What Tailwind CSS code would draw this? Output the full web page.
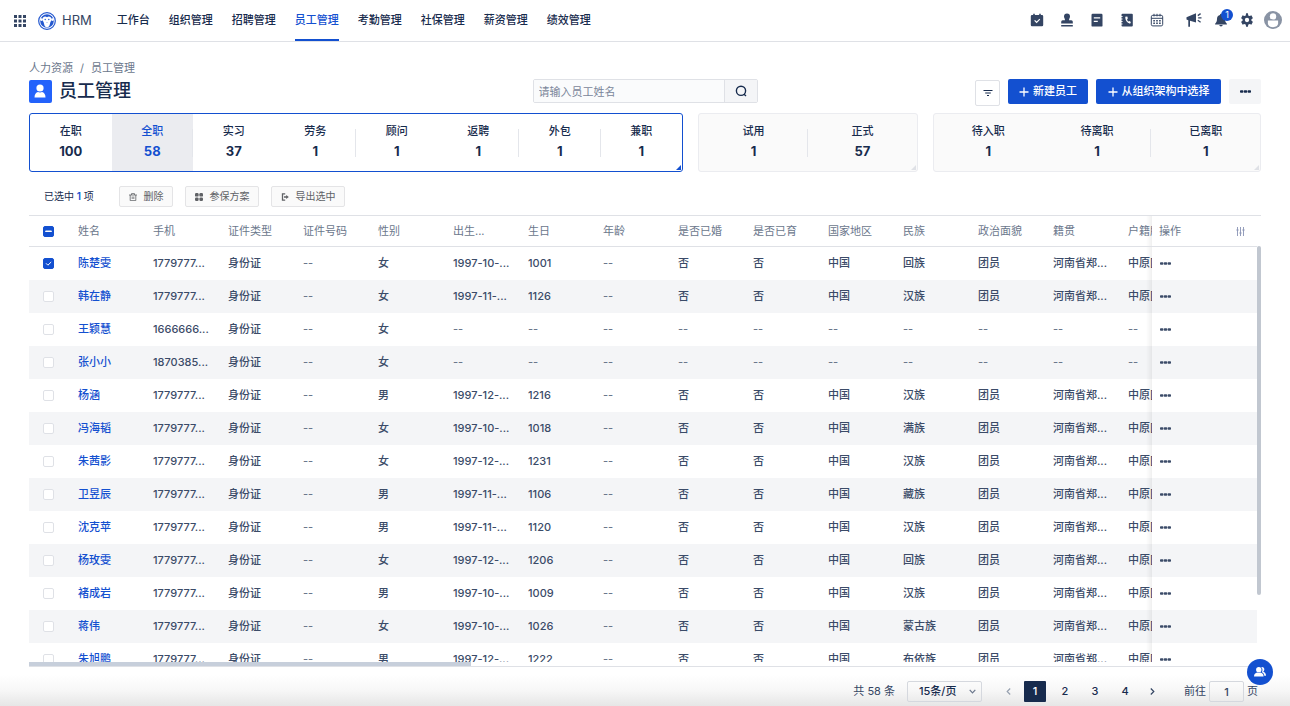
<!DOCTYPE html>
<html lang="zh-CN">
<head>
    <meta charset="UTF-8">
    <meta name="viewport" content="width=device-width, initial-scale=1.0">
    <title>HRM - 员工管理</title>
    <script src="https://cdn.jsdelivr.net/npm/@tailwindcss/browser@4"></script>
</head>
<body class="h-screen flex flex-col overflow-hidden bg-white text-[11px] text-[#172b4d] font-['Inter','Noto_Sans_CJK_SC',sans-serif]">

    <header class="h-[42px] shrink-0 flex items-center border-b border-[#dfe1e6] pl-3.5 pr-2">
        <button aria-label="应用">
            <svg class="size-3 text-[#344563]" viewBox="0 0 12 12" fill="currentColor">
                <path d="M0 0h3v3H0zM4.5 0h3v3h-3zM9 0h3v3H9zM0 4.5h3v3H0zM4.5 4.5h3v3h-3zM9 4.5h3v3H9zM0 9h3v3H0zM4.5 9h3v3h-3zM9 9h3v3H9z"/>
            </svg>
        </button>
        <svg class="size-[18px] ml-3" viewBox="0 0 18 18">
            <circle cx="9" cy="9" r="8.3" fill="#fff" stroke="#2458cf" stroke-width="1.2"/>
            <path d="M9 2.200a6.800 6.800 0 1 0 0 13.600 6.800 6.800 0 0 0 0-13.600z" fill="#2458cf"/>
            <circle cx="3.500" cy="7.600" r="1.400" fill="#fff"/>
            <circle cx="14.500" cy="7.600" r="1.400" fill="#fff"/>
            <path d="M9 5.200C7.500 3.800 4.500 4.400 4.500 7.200c0 1.500.8 2.200 1.300 3.500.5 1.600.7 4.600 3.200 4.600s2.700-3 3.200-4.600c.5-1.300 1.300-2 1.300-3.500 0-2.800-3-3.400-4.500-2z" fill="#fff"/>
            <circle cx="7.200" cy="7.500" r=".7" fill="#2458cf"/>
            <circle cx="10.800" cy="7.500" r=".7" fill="#2458cf"/>
            <path d="M8.400 10h1.200L9 10.800z" fill="#2458cf"/>
        </svg>
        <span class="ml-1.5 text-[13px] text-[#344563]">HRM</span>

        <nav class="h-full flex gap-[19px] ml-[25px] font-medium">
            <a href="#" class="flex items-center">工作台</a>
            <a href="#" class="flex items-center">组织管理</a>
            <a href="#" class="flex items-center">招聘管理</a>
            <a href="#" class="flex items-center text-[#1350d0] border-b-2 border-[#1350d0] pt-0.5">员工管理</a>
            <a href="#" class="flex items-center">考勤管理</a>
            <a href="#" class="flex items-center">社保管理</a>
            <a href="#" class="flex items-center">薪资管理</a>
            <a href="#" class="flex items-center">绩效管理</a>
        </nav>

        <div class="flex items-center ml-auto pb-0.5 text-[#344563]">
            <div class="flex items-center gap-4 mr-[22px]">
                <button aria-label="待办">
                    <svg class="size-3.5" viewBox="0 0 14 14"><path fill="currentColor" d="M2 2h1.200V.8h1.600V2h4.400V.8h1.600V2H12a1.200 1.200 0 0 1 1.200 1.200v8.900a1.200 1.200 0 0 1-1.200 1.200H2A1.200 1.200 0 0 1 .8 12.100V3.200A1.200 1.200 0 0 1 2 2z"/><path d="M4.600 7.400l2 1.900 3.200-3.200" fill="none" stroke="#fff" stroke-width="1.200"/></svg>
                </button>
                <button aria-label="审批">
                    <svg class="size-3.5" viewBox="0 0 14 14" fill="currentColor"><path d="M7 .5a3 3 0 0 1 3 3c0 1.500-1 2.200-1 3.700h2.300a1.500 1.500 0 0 1 1.500 1.500v1.800H1.200V8.700a1.500 1.500 0 0 1 1.500-1.500H5c0-1.500-1-2.200-1-3.700a3 3 0 0 1 3-3zM1.200 12h11.600v1.500H1.200z"/></svg>
                </button>
                <button aria-label="文档">
                    <svg class="size-3.5" viewBox="0 0 14 14"><rect x="1.500" y=".8" width="11" height="12.800" rx="1.200" fill="currentColor"/><path d="M3.800 4.900h6.400M3.800 8.300h4" stroke="#fff" stroke-width="1.300"/></svg>
                </button>
                <button aria-label="通讯录">
                    <svg class="size-3.5" viewBox="0 0 14 14"><rect x="1.500" y=".8" width="11.300" height="12.800" rx="1" fill="currentColor"/><path d="M1 3.500h1.600M1 6h1.600M1 8.500h1.600M1 11h1.600" stroke="#fff" stroke-width=".9"/><path d="M5.200 3.700c0 3.500 1.700 6.200 4.900 7l.8-1.600-1.700-1.100-.8.600C7.600 8 7.200 7 7.100 5.900l.8-.5-.6-2z" fill="#fff"/></svg>
                </button>
                <button aria-label="日历">
                    <svg class="size-3.5" viewBox="0 0 14 14" fill="none" stroke="currentColor"><rect x="1.300" y="2.300" width="11.400" height="10.600" rx="1.500"/><path d="M1.300 5.300h11.400M4 .8v2.600M7 .8v2.600M10 .8v2.600"/><path d="M3.300 7.700h1.600M6.200 7.700h1.600M9.100 7.700h1.600M3.300 10.300h1.600M6.200 10.300h1.600M9.100 10.300h1.600" stroke-width="1.500"/></svg>
                </button>
            </div>
            <button aria-label="公告">
                <svg class="size-4" viewBox="0 0 16 16"><path d="M.5 5.200L10 1.300v9.200L4 8.800v6H2.300V8.200L.5 7.600z" fill="currentColor"/><path d="M11.800 3.600l2.800-2M12.200 5.900h3.300M11.800 8.200l2.800 2" stroke="currentColor" stroke-width="1.300"/></svg>
            </button>
            <button aria-label="通知" class="relative ml-3">
                <svg class="size-3.5" viewBox="0 0 14 14" fill="currentColor"><path d="M7 .8a1 1 0 0 1 1 1v.3c1.900.4 3 1.900 3 3.900 0 2.500.6 3.500 1.900 4.700v.8H1.100v-.8C2.400 9.500 3 8.500 3 6c0-2 1.100-3.500 3-3.900v-.3a1 1 0 0 1 1-1zM5.300 12.100h3.400a1.700 1.400 0 0 1-3.400 0z"/></svg>
                <span class="absolute -top-1 left-[7px] size-3 rounded-full bg-[#1350d0] text-white text-[9px] leading-3 text-center">1</span>
            </button>
            <button aria-label="设置" class="ml-3">
                <svg class="size-3.5" viewBox="0 0 24 24" fill="currentColor"><path d="M19.400 13c0-.3.1-.6.100-1s0-.7-.1-1l2.500-1.900c.2-.2.300-.5.100-.7l-2.300-4c-.1-.3-.4-.4-.7-.3l-2.900 1.200c-.6-.5-1.300-.9-2-1.200L13.700 1c0-.3-.3-.5-.6-.5h-2.200c-.3 0-.6.2-.6.5L9.900 4.100c-.7.300-1.400.7-2 1.200L5 4.100c-.3-.1-.6 0-.7.300l-2.300 4c-.2.200-.1.500.1.700L4.600 11c0 .3-.1.700-.1 1s0 .7.1 1l-2.500 1.900c-.2.200-.3.500-.1.700l2.300 4c.1.300.4.400.7.300l2.900-1.200c.6.500 1.300.9 2 1.200l.4 3.100c0 .3.300.5.6.5h2.200c.3 0 .6-.2.6-.5l.4-3.100c.7-.3 1.400-.7 2-1.200l2.900 1.200c.3.100.6 0 .7-.3l2.300-4c.2-.2.100-.5-.1-.7zM12 15.700a3.700 3.700 0 1 1 0-7.400 3.700 3.700 0 0 1 0 7.400z"/></svg>
            </button>
            <button aria-label="我的" class="ml-2.5">
                <svg class="size-[18px]" viewBox="0 0 18 18"><circle cx="9" cy="9" r="9" fill="#8993a4"/><circle cx="9" cy="5.400" r="3.200" fill="#fff"/><path d="M3.900 9.500h10.200v3.100c0 2.200-2.300 3.600-5.100 3.600s-5.100-1.400-5.100-3.600z" fill="#fff"/></svg>
            </button>
        </div>
    </header>

    <main class="flex-1 min-h-0 flex flex-col px-[29px] pt-[18px]">
        <div class="flex gap-[7px] leading-4 text-[#6b778c]">
            <a href="#">人力资源</a><span>/</span><a href="#">员工管理</a>
        </div>

        <div class="grid grid-cols-[1fr_225px_1fr] grid-rows-[24px] mt-[3px]">
            <div class="flex items-center">
                <svg class="size-[23px]" viewBox="0 0 23 23"><rect width="23" height="23" rx="2" fill="#2362fb"/><circle cx="11" cy="8" r="3.600" fill="#fff"/><path d="M5.500 17.500c0-3.200 1.500-5 3.500-5.500.7.600 3.300.6 4 0 2 .5 3.500 2.300 3.500 5.500z" fill="#fff"/></svg>
                <h1 class="ml-[7px] text-lg leading-5 font-medium">员工管理</h1>
            </div>
            <div class="flex border border-[#dfe1e6] rounded-xs overflow-hidden">
                <input type="text" aria-label="搜索员工" placeholder="请输入员工姓名" class="flex-1 min-w-0 px-[5px] pt-0.5 bg-[#fafbfc] placeholder:text-[#7a869a]">
                <button aria-label="搜索" class="w-[33px] flex items-center justify-center border-l border-[#dfe1e6] bg-[#f4f5f7]">
                    <svg class="size-3" viewBox="0 0 12 12" fill="none" stroke="currentColor" stroke-width="1.400"><circle cx="6" cy="5.800" r="4.600"/><path d="M8.800 9l2.200 2"/></svg>
                </button>
            </div>
            <div class="flex items-start justify-end gap-2 font-medium">
                <button aria-label="筛选" class="w-[25px] h-[26px] mt-px flex items-center justify-center border border-[#dfe1e6] rounded-xs">
                    <svg class="w-2.5 h-2" viewBox="0 0 10 8" stroke="currentColor" stroke-width="1.100"><path d="M.5 1.500h9M2.200 4h5.600M4 6.500h2"/></svg>
                </button>
                <button class="w-20 h-[25px] flex items-center justify-center gap-1 rounded-xs bg-[#1350d0] text-white">
                    <svg class="size-2.5" viewBox="0 0 10 10" stroke="currentColor" stroke-width="1.300"><path d="M5 .5v9M.5 5h9"/></svg>新建员工
                </button>
                <button class="w-[125px] h-[25px] flex items-center justify-center gap-1 rounded-xs bg-[#1350d0] text-white">
                    <svg class="size-2.5" viewBox="0 0 10 10" stroke="currentColor" stroke-width="1.300"><path d="M5 .5v9M.5 5h9"/></svg>从组织架构中选择
                </button>
                <button aria-label="更多" class="w-8 h-[25px] flex items-center justify-center rounded-xs bg-[#f4f5f7]">
                    <svg class="w-[11px] h-[3px]" viewBox="0 0 11 3" fill="currentColor"><rect y=".3" width="3.400" height="2.400" rx=".8"/><rect x="3.800" y=".3" width="3.400" height="2.400" rx=".8"/><rect x="7.600" y=".3" width="3.400" height="2.400" rx=".8"/></svg>
                </button>
            </div>
        </div>

        <div id="statusGroups" class="grid grid-cols-[654fr_220fr_328fr] gap-[15px] mt-2.5"></div>

        <div class="flex items-center mt-3.5 pl-[15px] text-[10px]">
            <span class="w-[75px]">已选中 <span class="text-[#1350d0] font-semibold">1</span> 项</span>
            <div class="flex gap-3 text-[#606266]">
                <button class="w-[54px] h-[21px] flex items-center justify-center gap-[7px] border border-[#e4e4e6] rounded-xs bg-[#fafafa]">
                    <svg class="size-2" viewBox="0 0 8 8" fill="none" stroke="currentColor" stroke-width=".8"><path d="M0 2h8M2.500 2V.6h3V2M1.200 2v5.600h5.600V2M3.200 3.500V6M4.800 3.500V6"/></svg>删除
                </button>
                <button class="w-[74px] h-[21px] flex items-center justify-center gap-[7px] border border-[#e4e4e6] rounded-xs bg-[#fafafa]">
                    <svg class="size-2" viewBox="0 0 8 8" fill="currentColor"><rect width="3.600" height="3.600" rx="1.200"/><rect x="4.400" width="3.600" height="3.600" rx="1.200"/><rect y="4.400" width="3.600" height="3.600" rx="1.200"/><rect x="4.400" y="4.400" width="3.600" height="3.600" rx="1.200"/></svg>参保方案
                </button>
                <button class="w-[74px] h-[21px] flex items-center justify-center gap-[7px] border border-[#e4e4e6] rounded-xs bg-[#fafafa]">
                    <svg class="size-2" viewBox="0 0 8 8" fill="none" stroke="currentColor" stroke-width="1.300"><path d="M4.200.8H1.500v6.400h2.700M3 4h3"/><path d="M5.200 2L7.800 4 5.200 6z" fill="currentColor" stroke="none"/></svg>导出选中
                </button>
            </div>
        </div>

        <div class="flex-1 min-h-0 grid grid-cols-[1fr_4px] grid-rows-[1fr_4px] mt-2 border-y border-[#dfe1e6]">
            <div class="min-w-0 min-h-0 overflow-hidden">
                <table class="w-[1270px] table-fixed border-separate border-spacing-0 text-left">
                    <thead class="text-[#6b778c]">
                        <tr id="headRow"></tr>
                    </thead>
                    <tbody id="rows" class="text-[#3b4b68] font-medium"></tbody>
                </table>
            </div>
            <div class="pt-[30px]"><div class="h-[84%] rounded-xs bg-[#c1c7d0]"></div></div>
            <div><div class="h-1 w-[36%] bg-[#c7cfdb]"></div></div>
        </div>
    </main>

    <footer class="h-[39px] shrink-0 flex items-center justify-end pt-2.5 pl-[29px] pr-8 bg-linear-to-b from-white from-20% via-[#f7f7f7] via-60% to-[#e6e6e6]">
        <span class="text-[#344563]">共 58 条</span>
        <div class="relative ml-3">
            <select aria-label="每页条数" class="appearance-none w-[75px] h-[21px] pl-[11px] border border-[#d5d8de] rounded-xs font-medium">
                <option>15条/页</option>
                <option>30条/页</option>
            </select>
            <svg class="absolute right-1.5 top-2 w-[7px] h-[5px] text-[#6b778c] pointer-events-none" viewBox="0 0 7 5" fill="none" stroke="currentColor" stroke-width="1.200"><path d="M.7.8l2.800 3L6.300.8"/></svg>
        </div>
        <nav class="flex gap-2 ml-[18px] font-medium">
            <button aria-label="上一页" class="w-4 h-[21px] flex items-center justify-center text-[#97a0af]">
                <svg class="w-[5px] h-[7px]" viewBox="0 0 5 7" fill="none" stroke="currentColor" stroke-width="1.200"><path d="M4.200.5l-3 3 3 3"/></svg>
            </button>
            <button class="w-[22px] h-[21px] bg-[#172b4d] text-white rounded-[1px]">1</button>
            <button class="w-[22px] h-[21px]">2</button>
            <button class="w-[22px] h-[21px]">3</button>
            <button class="w-[22px] h-[21px]">4</button>
            <button aria-label="下一页" class="w-4 h-[21px] flex items-center justify-center text-[#344563]">
                <svg class="w-[5px] h-[7px]" viewBox="0 0 5 7" fill="none" stroke="currentColor" stroke-width="1.200"><path d="M.8.5l3 3-3 3"/></svg>
            </button>
        </nav>
        <label class="flex items-center gap-[3px] ml-6 text-[#344563]">前往
            <input type="text" value="1" class="w-[35px] h-[21px] border border-[#d5d8de] rounded-xs text-center font-medium">页
        </label>
    </footer>

    <button aria-label="联系人" class="fixed right-[17px] bottom-[21px] size-[26px] flex items-center justify-center rounded-full bg-[#1350d0] text-white">
        <svg class="size-3" viewBox="0 0 12 12" fill="currentColor"><circle cx="4.800" cy="3.800" r="2.700"/><path d="M0 10.500c0-2.300 1.500-3.600 3.200-3.900.9.600 2.300.6 3.200 0 1.700.3 3.200 1.600 3.200 3.900z"/><path d="M7.300 1.200c2.800-.8 4.200 2.700 1.900 4.600 1.600.5 2.800 1.800 2.800 4h-1.700c-.2-1.800-1-3-2.400-3.600.9-1.700.8-3.700-.6-5z"/></svg>
    </button>

    <script>
        // [label, count, divider on the right]
        const groups = [
            { active: true, items: [["在职", 100, 0], ["全职", 58, 1], ["实习", 37, 0], ["劳务", 1, 1], ["顾问", 1, 0], ["返聘", 1, 1], ["外包", 1, 1], ["兼职", 1, 0]] },
            { active: false, items: [["试用", 1, 1], ["正式", 57, 0]] },
            { active: false, items: [["待入职", 1, 0], ["待离职", 1, 1], ["已离职", 1, 0]] },
        ];
        const columns = ["姓名", "手机", "证件类型", "证件号码", "性别", "出生...", "生日", "年龄", "是否已婚", "是否已育", "国家地区", "民族", "政治面貌", "籍贯", "户籍所"];
        // name, phone, gender, birth month, birthday, ethnic group
        const people = [
            ["陈楚雯", "1779777...", "女", "1997-10-...", "1001", "回族"],
            ["韩在静", "1779777...", "女", "1997-11-...", "1126", "汉族"],
            ["王颖慧", "1666666...", "女"],
            ["张小小", "1870385...", "女"],
            ["杨涵", "1779777...", "男", "1997-12-...", "1216", "汉族"],
            ["冯海韬", "1779777...", "女", "1997-10-...", "1018", "满族"],
            ["朱茜影", "1779777...", "女", "1997-12-...", "1231", "汉族"],
            ["卫昱辰", "1779777...", "男", "1997-11-...", "1106", "藏族"],
            ["沈克苹", "1779777...", "男", "1997-11-...", "1120", "汉族"],
            ["杨玫雯", "1779777...", "女", "1997-12-...", "1206", "回族"],
            ["褚成岩", "1779777...", "男", "1997-10-...", "1009", "汉族"],
            ["蒋伟", "1779777...", "女", "1997-10-...", "1026", "蒙古族"],
            ["朱旭鹏", "1779777...", "男", "1997-12-...", "1222", "布依族"],
        ];

        document.getElementById("statusGroups").innerHTML = groups.map(g => `
            <div class="relative flex h-[59px] border rounded-[3px] ${g.active ? "border-[#1350d0]" : "border-[#ebecf0] bg-[#fafafa]"}">
                ${g.items.map(([label, count, line]) => `
                    <button class="flex-1 relative flex flex-col items-center justify-center pb-[3px] ${label === "全职" ? "bg-[#ebecf0] text-[#1350d0]" : ""}">
                        <span class="leading-5 font-medium">${label}</span>
                        <span class="text-[13px] leading-5 font-bold">${count}</span>
                        ${line ? `<span class="absolute right-0 top-[15px] h-7 w-px bg-[#e4e6eb]"></span>` : ""}
                    </button>`).join("")}
                <svg class="absolute right-px bottom-px size-[5px] ${g.active ? "text-[#1350d0]" : "text-[#dfe1e6]"}" viewBox="0 0 5 5" fill="currentColor"><path d="M5 0v5H0z"/></svg>
            </div>`).join("");

        const stickyCell = "sticky right-0 before:absolute before:inset-y-0 before:-left-1.5 before:w-1.5 before:bg-linear-to-r before:from-transparent before:to-black/6";

        function checkbox(label, checked, mark) {
            return `<label class="relative block size-[11px] ml-3.5">
                <input type="checkbox" aria-label="${label}" ${checked ? "checked" : ""} class="block appearance-none size-[11px] rounded-xs border border-[#dfe1e6] bg-white checked:bg-[#1350d0] checked:border-[#1350d0]">
                ${checked ? `<svg class="absolute inset-0 size-[11px]" viewBox="0 0 11 11" fill="none" stroke="#fff" stroke-width="1"><path d="${mark}"/></svg>` : ""}
            </label>`;
        }

        document.getElementById("headRow").innerHTML =
            `<th class="w-10 h-[31px] p-0 border-b border-[#dfe1e6]">${checkbox("全选", true, "M2.500 5h6v.5h-6z")}</th>` +
            columns.map(c => `<th class="w-[75px] p-0 pt-px pl-[9px] font-normal whitespace-nowrap overflow-hidden border-b border-[#dfe1e6]">${c}</th>`).join("") +
            `<th class="${stickyCell} w-[105px] p-0 pt-px pl-[7px] font-normal bg-white border-b border-[#dfe1e6]">
                <div class="flex items-center justify-between pr-3">操作
                    <button aria-label="列设置"><svg class="size-[9px] text-[#8993b4]" viewBox="0 0 9 9" fill="none" stroke="currentColor" stroke-width=".9"><path d="M1.500 0v9M4.500 0v9M7.500 0v9M.3 3h2.400M3.300 6h2.400M6.300 3h2.400"/></svg></button>
                </div>
            </th>`;

        document.getElementById("rows").innerHTML = people.map(([name, phone, gender, birth, day, ethnic], i) => {
            const full = Boolean(birth);
            const values = [phone, "身份证", "--", gender, birth, day, "--"]
                .concat(full ? ["否", "否", "中国", ethnic, "团员", "河南省郑...", "中原区"] : ["", "", "", "", "", "", ""]);
            const bg = i % 2 ? "bg-[#f4f5f7]" : "bg-white";
            return `<tr class="${bg}">
                <td class="h-[33px] p-0">${checkbox(name, i === 0, "M3 5.300l1.900 1.900L8.200 4")}</td>
                <td class="p-0 pl-[9px]"><a href="#" class="text-[#1350d0]">${name}</a></td>
                ${values.map(v => `<td class="p-0 pl-[9px] whitespace-nowrap overflow-hidden ${!v || v === "--" ? "text-[#6b778c]" : ""}">${v || "--"}</td>`).join("")}
                <td class="${stickyCell} ${bg} p-0 pl-2">
                    <button aria-label="操作" class="block"><svg class="w-[11px] h-[3px]" viewBox="0 0 11 3" fill="currentColor"><rect y=".3" width="3.400" height="2.400" rx=".8"/><rect x="3.800" y=".3" width="3.400" height="2.400" rx=".8"/><rect x="7.600" y=".3" width="3.400" height="2.400" rx=".8"/></svg></button>
                </td>
            </tr>`;
        }).join("");
    </script>
</body>
</html>
